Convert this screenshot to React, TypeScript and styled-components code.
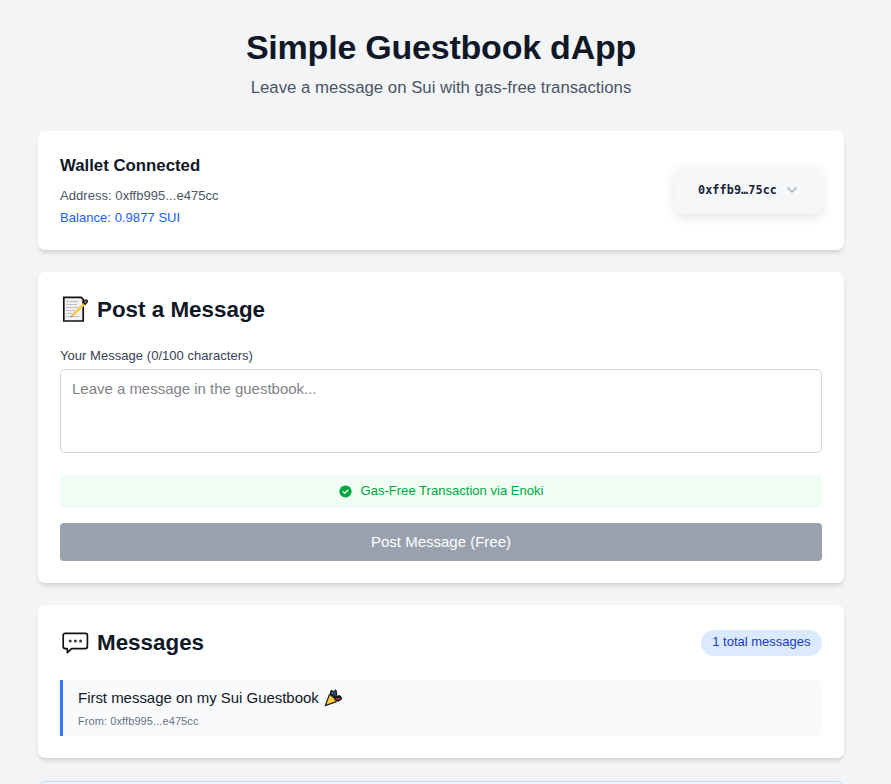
import React from 'react';
import styled, { createGlobalStyle } from 'styled-components';

const GlobalStyle = createGlobalStyle`
  *, *::before, *::after { box-sizing: border-box; }
  html, body { margin: 0; height: 100%; overflow: hidden; background: #f3f4f6; }
  body { font-family: "Liberation Sans", Arial, sans-serif; color: #101828; }
  h1, h2, h3, p { margin: 0; }
  button, textarea { font-family: inherit; }
`;

const Page = styled.main`
  width: 882px;
  height: 784px;
  overflow: hidden;
  padding: 28px 38px 0;
`;

const Header = styled.header`
  height: 103px;
  text-align: center;
`;

const Title = styled.h1`
  font-size: 34px;
  line-height: 38px;
  font-weight: 700;
  letter-spacing: -0.22px;
`;

const Subtitle = styled.p`
  margin-top: 9px;
  font-size: 16.8px;
  line-height: 25px;
  color: #4a5565;
`;

const Stack = styled.div`
  display: flex;
  flex-direction: column;
  gap: 22px;
`;

const Card = styled.section<{ $height: number }>`
  flex: none;
  height: ${({ $height }) => $height}px;
  padding: 22px;
  background: #fff;
  border-radius: 7px;
  box-shadow: 0 4px 5px -1px rgba(0, 0, 0, 0.1), 0 2px 4px -2px rgba(0, 0, 0, 0.1);
`;

const WalletCard = styled(Card)`
  display: flex;
  justify-content: space-between;
  align-items: flex-start;
`;

const WalletTitle = styled.h3`
  font-size: 16.8px;
  line-height: 26px;
  margin-bottom: 6px;
`;

const WalletLine = styled.p<{ $accent?: boolean }>`
  font-size: 13px;
  line-height: 22px;
  letter-spacing: 0.05px;
  color: ${({ $accent }) => ($accent ? '#155dfc' : '#4a5565')};
`;

const AccountButton = styled.button`
  display: flex;
  align-items: center;
  justify-content: center;
  gap: 10px;
  width: 149px;
  height: 48px;
  border: 0;
  margin: 13px -1px 0 0;
  padding: 0 2px 0 0;
  border-radius: 11px;
  background: #f6f7f9;
  color: #182435;
  font: 700 11.8px "DejaVu Sans Mono", monospace;
  letter-spacing: 0.09px;
  box-shadow: 0 4px 11px rgba(0, 0, 0, 0.1);
`;

const SectionTitle = styled.h2`
  display: flex;
  align-items: center;
  gap: 7px;
  height: 31px;
  font-size: 22.4px;
  line-height: 31px;
`;

const Label = styled.label`
  display: block;
  margin-top: 22px;
  font-size: 13px;
  line-height: 18px;
  letter-spacing: 0.04px;
  color: #364153;
`;

const MessageInput = styled.textarea`
  display: block;
  width: 100%;
  height: 84px;
  margin-top: 4px;
  padding: 8px 11px;
  border: 1px solid #d1d5dc;
  border-radius: 5px;
  background: #fff;
  font-size: 15px;
  line-height: 22px;
  letter-spacing: -0.02px;
  resize: none;
  &::placeholder { color: #808389; opacity: 1; }
`;

const Notice = styled.div`
  display: flex;
  align-items: center;
  justify-content: center;
  gap: 9px;
  height: 33px;
  margin-top: 22px;
  border-radius: 4px;
  background: #f0fdf4;
  color: #00a63e;
  font-size: 13px;
  letter-spacing: 0.03px;
`;

const NoticeText = styled.span`
  padding-bottom: 2px;
`;

const PostButton = styled.button`
  display: block;
  width: 100%;
  height: 38px;
  margin-top: 15px;
  border: 0;
  border-radius: 4px;
  padding: 0 0 2px;
  background: #99a1af;
  color: #fff;
  font-size: 15px;
`;

const MessagesHeader = styled.div`
  display: flex;
  justify-content: space-between;
  align-items: center;
  height: 32px;
`;

const MessagesTitle = styled(SectionTitle)`
  height: 29px;
  line-height: 28px;
  margin-bottom: 1px;
`;

const CountBadge = styled.span`
  height: 26px;
  padding: 0 11.5px 0 11px;
  border-radius: 13px;
  background: #dbeafe;
  color: #193cb8;
  font-size: 13px;
  line-height: 24px;
`;

const MessageItem = styled.article`
  height: 56px;
  margin-top: 21px;
  padding: 7px 15px;
  border-left: 3px solid #2b7fff;
  border-radius: 0 7px 7px 0;
  background: #f9fafb;
`;

const MessageText = styled.p`
  display: flex;
  align-items: center;
  gap: 5px;
  font-size: 15px;
  line-height: 22px;
  letter-spacing: -0.03px;
`;

const MessageMeta = styled.p`
  margin-top: 5px;
  font-size: 11px;
  line-height: 14px;
  letter-spacing: 0.09px;
  color: #6a7282;
`;

const InfoCard = styled.section`
  flex: none;
  height: 90px;
  margin-top: 1px;
  border: 1px solid #bedbff;
  border-radius: 7px;
  background: #eff6ff;
`;

const ChevronIcon = () => (
  <svg width="10" height="6" viewBox="0 0 10 6" fill="none" stroke="#a0b6c3" strokeWidth="1.5">
    <path d="M.6.6 5 5 9.4.6" />
  </svg>
);

const MemoIcon = () => (
  <svg width="30" height="30" viewBox="0 0 30 30">
    <path d="M3.8 2.3h17.4l2 2V26H3.8z" fill="#f1f1f1" stroke="#111" strokeWidth="1.7" />
    <path d="M6 6.5h12M6 9.5h11M6 12.5h13M6 15.5h9M6 18.5h7M6 21.5h13" stroke="#bfc1c4" strokeWidth="1.2" />
    <path d="m10.5 22.5 1.8-3.6L24.4 6.7l2 2-12.3 11.9z" fill="#f7c744" />
    <path d="m10.5 22.5.9-2 1.1 1z" fill="#777" />
    <path d="m23.2 7.2 2-2c1-.9 2.8.7 2 1.9l-2 2.2z" fill="#a98680" stroke="#171313" strokeWidth="1.4" />
  </svg>
);

const SpeechIcon = () => (
  <svg width="30" height="28" viewBox="0 0 30 28" fill="#fff">
    <path
      d="M5.2 4.3h20.2a2 2 0 0 1 2 2v11.3a2 2 0 0 1-2 2H11.6l-4.3 4v-4H5.2a2 2 0 0 1-2-2V6.3a2 2 0 0 1 2-2z"
      stroke="#111" strokeWidth="1.7" strokeLinejoin="round"
    />
    <g fill="#3b3b3b">
      <circle cx="10.2" cy="12" r="1.5" />
      <circle cx="15.4" cy="12" r="1.5" />
      <circle cx="20.6" cy="12" r="1.5" />
    </g>
  </svg>
);

const CheckIcon = () => (
  <svg width="13" height="13" viewBox="0 0 20 20">
    <circle cx="10" cy="10" r="9.4" fill="#00a63e" />
    <path d="m6.2 10.2 2.6 2.6 5-5" fill="none" stroke="#f0fdf4" strokeWidth="2" strokeLinecap="round" />
  </svg>
);

const PartyIcon = () => (
  <svg width="19" height="18" viewBox="0 0 19 18">
    <path d="m6 5 1.1-3.6 2.7 1.2 2-1.8 1 4.2-1 2.1 4.4-.3 1.7 3-3.4 2.4-4.5-1.2z" fill="#191a1d" stroke="#111" />
    <path d="m7.4 5.2.8-2.6 1.5 2.2" fill="#35aac8" />
    <path d="m10 6.5.8-4.5 1 1.3-.5 4.3" fill="#246d93" />
    <path d="m11.5 9.3 4.4-.4.7 1.3-4 .8" fill="#b93648" />
    <path d="M1.4 16.5 5.3 5.8c3 1.1 5.8 4.1 6.8 7z" fill="#ffc83d" stroke="#151515" strokeWidth="1.1" />
    <path d="M5.7 6.5c2.4 1.1 4.5 3.4 5.6 5.8" fill="none" stroke="#e79828" />
  </svg>
);

export default function App() {
  return (
    <>
      <GlobalStyle />
      <Page>
        <Header>
          <Title>Simple Guestbook dApp</Title>
          <Subtitle>Leave a message on Sui with gas-free transactions</Subtitle>
        </Header>
        <Stack>
          <WalletCard $height={119}>
            <div>
              <WalletTitle>Wallet Connected</WalletTitle>
              <WalletLine>Address: 0xffb995...e475cc</WalletLine>
              <WalletLine $accent>Balance: 0.9877 SUI</WalletLine>
            </div>
            <AccountButton>
              0xffb9…75cc
              <ChevronIcon />
            </AccountButton>
          </WalletCard>
          <Card $height={311}>
            <SectionTitle><MemoIcon />Post a Message</SectionTitle>
            <Label htmlFor="message">Your Message (0/100 characters)</Label>
            <MessageInput id="message" placeholder="Leave a message in the guestbook..." />
            <Notice><CheckIcon /><NoticeText>Gas-Free Transaction via Enoki</NoticeText></Notice>
            <PostButton>Post Message (Free)</PostButton>
          </Card>
          <Card $height={153}>
            <MessagesHeader>
              <MessagesTitle><SpeechIcon />Messages</MessagesTitle>
              <CountBadge>1 total messages</CountBadge>
            </MessagesHeader>
            <MessageItem>
              <MessageText>First message on my Sui Guestbook <PartyIcon /></MessageText>
              <MessageMeta>From: 0xffb995...e475cc</MessageMeta>
            </MessageItem>
          </Card>
          <InfoCard />
        </Stack>
      </Page>
    </>
  );
}
